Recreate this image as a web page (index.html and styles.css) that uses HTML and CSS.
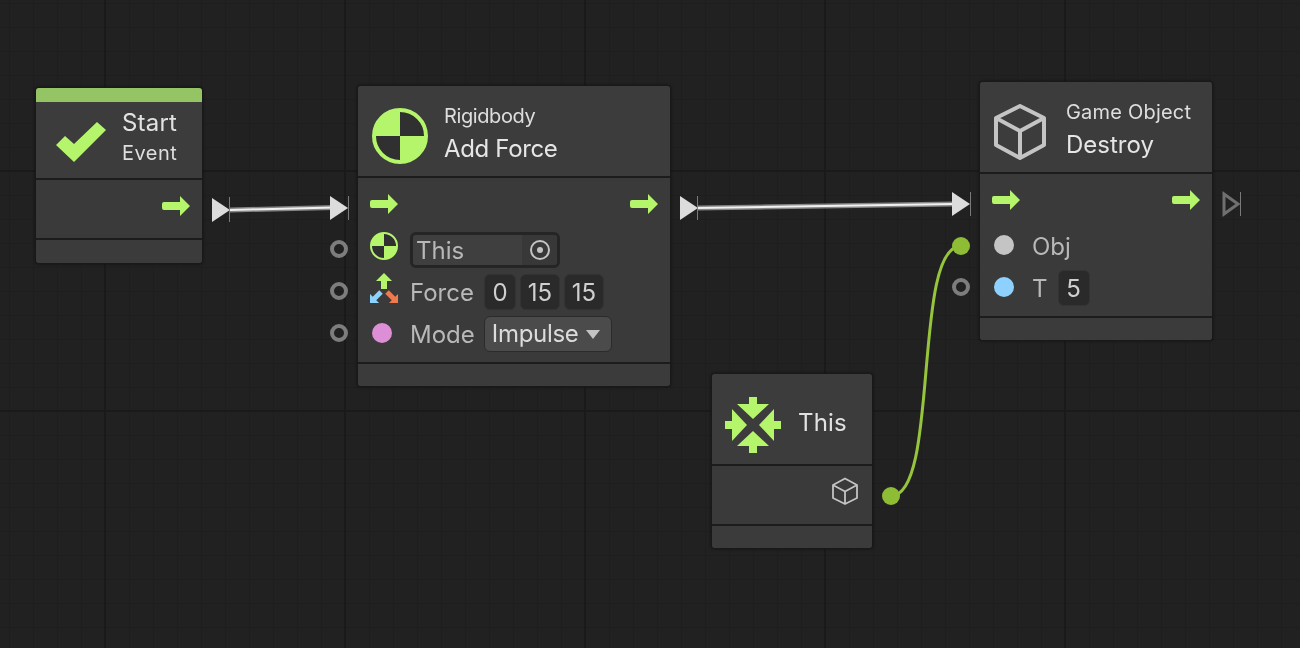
FILE: index.html
```html
<!DOCTYPE html>
<html lang="en">
<head>
<meta charset="utf-8">
<title>Script Graph</title>
<link rel="stylesheet" href="styles.css">
</head>
<body>
<main class="canvas">
  <svg class="wires" width="1300" height="648" viewBox="0 0 1300 648" aria-hidden="true">
    <defs>
      <g id="port-empty"><circle r="7" fill="none" stroke="#7d7d7d" stroke-width="4"/></g>
      <g id="tri"><path d="M0-12 18 0 0 12Z" fill="#dcdcdc"/></g>
    </defs>
    <path class="wire-out" d="M230 210 335 207.500"/>
    <path class="wire-in" d="M230 210 335 207.500"/>
    <path class="wire-out" d="M697 208 953 204"/>
    <path class="wire-in" d="M697 208 953 204"/>
    <use href="#tri" x="212" y="210"/>
    <use href="#tri" x="330" y="208"/>
    <use href="#tri" x="680" y="208"/>
    <use href="#tri" x="952" y="204"/>
    <path class="tick" d="M229.500 197V222M348.500 196V220M697.500 196V220M970.500 192V216M1240.500 192V216"/>
    <path d="M1224 194 1238 204 1224 214Z" fill="none" stroke="#6f6f6f" stroke-width="3"/>
    <path class="wire-data" d="M891 496C940 496 912 246 961 246"/>
    <circle cx="961" cy="246" r="9" fill="#8fbc35"/>
    <circle cx="891" cy="496" r="9" fill="#8fbc35"/>
    <use href="#port-empty" x="339" y="249"/>
    <use href="#port-empty" x="339" y="291"/>
    <use href="#port-empty" x="339" y="333"/>
    <use href="#port-empty" x="961" y="287"/>
  </svg>

  <section class="node node-start">
    <div class="stripe"></div>
    <header class="head head-start">
      <svg class="icon-check" width="50" height="40" viewBox="0 0 50 40" aria-hidden="true"><path d="M0 23 9 14 18 22 41 0 50 8 18 40Z" fill="#b5f56c"/></svg>
      <div class="titles">
        <div class="t-main">Start</div>
        <div class="t-sub t-event">Event</div>
      </div>
    </header>
    <div class="body body-start">
      <div class="row row-end">
        <svg class="flow" width="28" height="20" viewBox="0 0 28 20" aria-hidden="true"><path d="M2 6H18V0L28 10 18 20V14H2Q0 14 0 12V8Q0 6 2 6Z" fill="#b5f56c"/></svg>
      </div>
    </div>
    <footer class="foot foot-start"></footer>
  </section>

  <section class="node node-force">
    <header class="head head-force">
      <svg class="icon-rb" width="56" height="56" viewBox="0 0 56 56" aria-hidden="true"><circle cx="28" cy="28" r="26" fill="#303030" stroke="#b5f56c" stroke-width="4"/><path d="M28 2A26 26 0 0 0 2 28H28ZM28 28V54A26 26 0 0 0 54 28Z" fill="#b5f56c"/></svg>
      <div class="titles">
        <div class="t-sub t-rigid">Rigidbody</div>
        <div class="t-name t-add">Add Force</div>
      </div>
    </header>
    <div class="body body-force">
      <div class="row row-flow">
        <svg class="flow" width="28" height="20" viewBox="0 0 28 20" aria-hidden="true"><path d="M2 6H18V0L28 10 18 20V14H2Q0 14 0 12V8Q0 6 2 6Z" fill="#b5f56c"/></svg>
        <svg class="flow" width="28" height="20" viewBox="0 0 28 20" aria-hidden="true"><path d="M2 6H18V0L28 10 18 20V14H2Q0 14 0 12V8Q0 6 2 6Z" fill="#b5f56c"/></svg>
      </div>
      <div class="row row-param">
        <svg class="slot slot-up" width="28" height="28" viewBox="0 0 28 28" aria-hidden="true"><circle cx="14" cy="14" r="13" fill="#303030" stroke="#b5f56c" stroke-width="2"/><path d="M14 1A13 13 0 0 0 1 14H14ZM14 14V27A13 13 0 0 0 27 14Z" fill="#b5f56c"/></svg>
        <div class="objfield">
          <span class="objname">This</span>
          <span class="objpick"><svg width="22" height="22" viewBox="0 0 22 22" aria-hidden="true"><circle cx="11" cy="11" r="9" fill="none" stroke="#c4c4c4" stroke-width="2"/><circle cx="11" cy="11" r="3" fill="#c4c4c4"/></svg></span>
        </div>
      </div>
      <div class="row row-param">
        <svg class="slot slot-axes" width="28" height="31" viewBox="0 0 28 31" aria-hidden="true">
          <path d="M14 0 22 8H17V16H11V8H6Z" fill="#b5f56c"/>
          <path d="M0 21 0 30 9 30Z" fill="#8cd2ff"/><path d="M4 26 11 19" stroke="#8cd2ff" stroke-width="5"/>
          <path d="M28 21 28 30 19 30Z" fill="#ee7a50"/><path d="M24 26 17 19" stroke="#ee7a50" stroke-width="5"/>
        </svg>
        <span class="label">Force</span>
        <span class="num num-s">0</span>
        <span class="num num-m">15</span>
        <span class="num num-m">15</span>
      </div>
      <div class="row row-param">
        <span class="slot dot dot-pink"></span>
        <span class="label">Mode</span>
        <span class="select">Impulse<i class="caret"></i></span>
      </div>
    </div>
    <footer class="foot foot-force"></footer>
  </section>

  <section class="node node-destroy">
    <header class="head head-destroy">
      <svg class="icon-cube" width="54" height="56" viewBox="0 0 54 56" aria-hidden="true"><path d="M27 2 51 14V41L27 54 3 41V14ZM3 14 27 27 51 14M27 27V54" fill="none" stroke="#c4c4c4" stroke-width="4" stroke-linejoin="round"/></svg>
      <div class="titles">
        <div class="t-sub t-game">Game Object</div>
        <div class="t-name">Destroy</div>
      </div>
    </header>
    <div class="body body-destroy">
      <div class="row row-flow">
        <svg class="flow" width="28" height="20" viewBox="0 0 28 20" aria-hidden="true"><path d="M2 6H18V0L28 10 18 20V14H2Q0 14 0 12V8Q0 6 2 6Z" fill="#b5f56c"/></svg>
        <svg class="flow" width="28" height="20" viewBox="0 0 28 20" aria-hidden="true"><path d="M2 6H18V0L28 10 18 20V14H2Q0 14 0 12V8Q0 6 2 6Z" fill="#b5f56c"/></svg>
      </div>
      <div class="row row-param">
        <span class="slot dot dot-grey"></span>
        <span class="label">Obj</span>
      </div>
      <div class="row row-param">
        <span class="slot dot dot-blue"></span>
        <span class="label">T</span>
        <span class="num num-s">5</span>
      </div>
    </div>
    <footer class="foot foot-destroy"></footer>
  </section>

  <section class="node node-this">
    <header class="head head-this">
      <svg class="icon-this" width="56" height="56" viewBox="0 0 56 56" aria-hidden="true"><path d="M24 0H32V7H44L28 22 12 7H24ZM24 56H32V49H44L28 34 12 49H24ZM0 24V32H7V44L22 28 7 12V24ZM56 24V32H49V44L34 28 49 12V24Z" fill="#b5f56c"/></svg>
      <div class="titles"><div class="t-main t-this">This</div></div>
    </header>
    <div class="body body-this">
      <div class="row row-end">
        <svg width="28" height="28" viewBox="0 0 28 28" aria-hidden="true"><path d="M14 1.500 26 8V21L14 27 2 21V8ZM2 8 14 14.500 26 8M14 14.500V27" fill="none" stroke="#c4c4c4" stroke-width="1.800" stroke-linejoin="round"/></svg>
      </div>
    </div>
    <footer class="foot foot-this"></footer>
  </section>
</main>
</body>
</html>
```
FILE: styles.css
```css
* { box-sizing: border-box; }
html, body { margin: 0; padding: 0; background: #202020; }
body { width: 1300px; height: 648px; overflow: hidden; font-family: Inter, "Liberation Sans", sans-serif; }

.canvas {
  position: relative;
  width: 1300px;
  height: 648px;
  filter: blur(.35px);
  background-color: #212121;
  background-image:
    linear-gradient(to right, #1a1a1a 2px, transparent 2px),
    linear-gradient(to bottom, #1a1a1a 2px, transparent 2px),
    linear-gradient(to right, #1e1e1e 1px, transparent 1px),
    linear-gradient(to bottom, #1e1e1e 1px, transparent 1px);
  background-size: 240px 240px, 240px 240px, 24px 24px, 24px 24px;
  background-position: 104px 170px, 104px 170px, 9px 3px, 9px 3px;
}

.wires { position: absolute; left: 0; top: 0; }
.wire-out { fill: none; stroke: #858585; stroke-width: 5; }
.wire-in { fill: none; stroke: #f0f0f0; stroke-width: 2; }
.wire-data { fill: none; stroke: #96c43c; stroke-width: 3; }
.tick { fill: none; stroke: #7a7a7a; stroke-width: 1; }

.node {
  position: absolute;
  display: flex;
  flex-direction: column;
  background: #3a3a3a;
  border-radius: 3px;
  box-shadow: 0 0 0 1px #191919, 0 0 3px 1px rgba(0, 0, 0, .45);
  overflow: hidden;
}
.node-start { left: 36px; top: 88px; width: 166px; height: 175px; }
.node-force { left: 358px; top: 86px; width: 312px; height: 300px; }
.node-destroy { left: 980px; top: 82px; width: 232px; height: 258px; }
.node-this { left: 712px; top: 374px; width: 160px; height: 174px; }

.stripe { height: 14px; background: #95c465; flex: none; }
.head {
  display: flex;
  align-items: center;
  flex: none;
  background: #3c3c3c;
  border-bottom: 2px solid #1c1c1c;
}
.head-start { height: 78px; padding: 0 0 4px 20px; gap: 16px; }
.head-force { height: 92px; padding: 8px 0 0 14px; gap: 16px; }
.head-destroy { height: 92px; padding: 8px 0 0 13px; gap: 19px; }
.head-this { height: 92px; padding: 8px 0 0 13px; gap: 17px; }
.icon-check { margin-top: 8px; }
.icon-rb, .icon-cube { margin-top: 2px; }
.icon-this { margin-top: 4px; }

.titles { display: flex; flex-direction: column; color: #e2e2e2; }
.t-main { font-size: 24px; line-height: 30px; letter-spacing: .2px; }
.t-sub { font-size: 20px; line-height: 28px; color: #dedede; }
.t-event { line-height: 30px; letter-spacing: .5px; }
.t-rigid { letter-spacing: -.4px; }
.t-game { letter-spacing: .2px; }
.t-name { font-size: 24px; line-height: 38px; color: #e6e6e6; }
.t-add { letter-spacing: -.35px; }

.body { flex: none; display: flex; flex-direction: column; background: #3a3a3a; border-bottom: 2px solid #1c1c1c; }
.body-start { height: 60px; padding: 0 12px 0 0; }
.body-force { height: 186px; padding: 16px 12px 0; }
.body-destroy { height: 144px; padding: 16px 12px 0; }
.body-this { height: 60px; padding: 0 13px 0 0; }
.body-start .row { height: 52px; }
.body-this .row { height: 50px; }

.row { display: flex; align-items: center; }
.row-end { justify-content: flex-end; }
.row-flow { justify-content: space-between; height: 20px; margin-bottom: 15px; }
.row-param { height: 42px; color: #b8b8b8; font-size: 24px; }

.foot { flex: 1; background: #3b3b3b; }

.slot { flex: none; width: 28px; margin-right: 12px; }
.slot-up { margin-bottom: 8px; }
.slot-axes { margin-bottom: 8px; }
.dot { height: 20px; width: 20px; margin-left: 2px; margin-right: 18px; margin-bottom: 2px; border-radius: 50%; }
.dot-pink { background: #dc8fd6; }
.dot-grey { background: #c4c4c4; }
.dot-blue { background: #8ed1ff; }

.label { padding-top: 2px; line-height: 42px; margin-right: 10px; white-space: nowrap; }

.objfield {
  display: flex;
  width: 150px;
  height: 36px;
  border: 3px solid #252525;
  border-radius: 6px;
  background: #383838;
  overflow: hidden;
}
.objname { flex: 1; padding: 1px 0 0 3px; line-height: 30px; color: #b8b8b8; background: #3f3f3f; }
.objpick { display: flex; align-items: center; justify-content: center; width: 35px; background: #383838; }

.num {
  display: flex;
  align-items: center;
  justify-content: center;
  height: 36px;
  margin-right: 4px;
  border: 1px solid #333;
  border-radius: 6px;
  background: #2a2a2a;
  color: #cfcfcf;
}
.num-s { width: 32px; }
.num-m { width: 40px; }
.select {
  display: flex;
  align-items: center;
  width: 128px;
  height: 36px;
  margin-left: -1px;
  padding: 0 0 2px 7px;
  border: 1px solid #2b2b2b;
  border-radius: 6px;
  background: #4b4b4b;
  color: #dcdcdc;
  letter-spacing: -.3px;
}
.caret {
  margin: 2px 0 0 7px;
  width: 0;
  height: 0;
  border-left: 7px solid transparent;
  border-right: 7px solid transparent;
  border-top: 9px solid #c4c4c4;
}
```
